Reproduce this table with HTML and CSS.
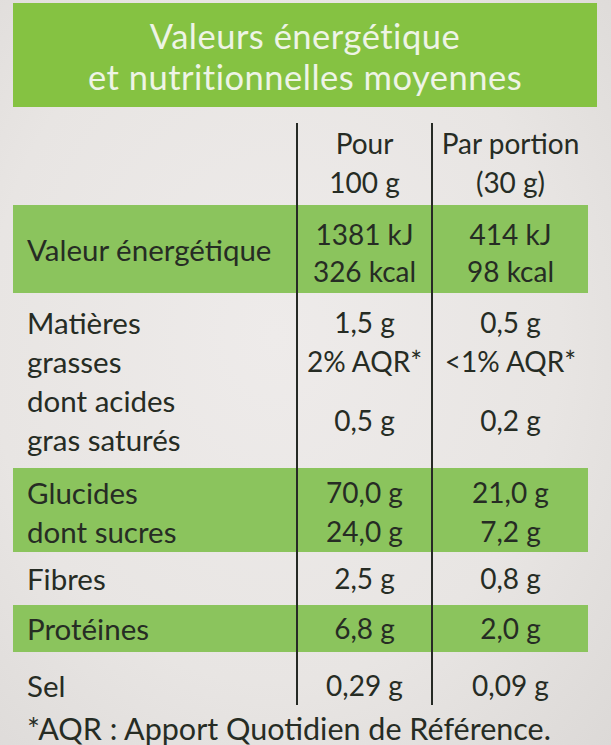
FILE: index.html
```html
<!DOCTYPE html>
<html lang="fr">
<head>
<meta charset="utf-8">
<title>Valeurs nutritionnelles</title>
<link rel="stylesheet" href="styles.css">
</head>
<body>
<div class="label">
  <div class="title">
    <div>Valeurs énergétique</div>
    <div>et nutritionnelles moyennes</div>
  </div>
  <div class="table">
    <div class="row head">
      <div class="c1"></div>
      <div class="c2"><div>Pour</div><div>100 g</div></div>
      <div class="c3"><div>Par portion</div><div>(30 g)</div></div>
    </div>
    <div class="row green energy">
      <div class="c1">Valeur énergétique</div>
      <div class="c2"><div>1381 kJ</div><div>326 kcal</div></div>
      <div class="c3"><div>414 kJ</div><div>98 kcal</div></div>
    </div>
    <div class="row fat1">
      <div class="c1"><div>Matières</div><div>grasses</div></div>
      <div class="c2"><div>1,5 g</div><div>2% AQR*</div></div>
      <div class="c3"><div>0,5 g</div><div>&lt;1% AQR*</div></div>
    </div>
    <div class="row fat2">
      <div class="c1"><div>dont acides</div><div>gras saturés</div></div>
      <div class="c2 mid">0,5 g</div>
      <div class="c3 mid">0,2 g</div>
    </div>
    <div class="row green carbs">
      <div class="c1"><div>Glucides</div><div>dont sucres</div></div>
      <div class="c2"><div>70,0 g</div><div>24,0 g</div></div>
      <div class="c3"><div>21,0 g</div><div>7,2 g</div></div>
    </div>
    <div class="row single fib">
      <div class="c1">Fibres</div>
      <div class="c2">2,5 g</div>
      <div class="c3">0,8 g</div>
    </div>
    <div class="row green single prot">
      <div class="c1">Protéines</div>
      <div class="c2">6,8 g</div>
      <div class="c3">2,0 g</div>
    </div>
    <div class="row single sel">
      <div class="c1">Sel</div>
      <div class="c2">0,29 g</div>
      <div class="c3">0,09 g</div>
    </div>
  </div>
  <div class="note">*AQR : Apport Quotidien de Référence.</div>
</div>
</body>
</html>
```
FILE: styles.css
```css
html, body {
  margin: 0;
  padding: 0;
}
body {
  width: 611px;
  height: 745px;
  overflow: hidden;
  background: radial-gradient(ellipse at 45% 45%, #eeebea 0%, #e8e5e3 60%, #dcd9d7 100%);
  font-family: Lato, "Open Sans", sans-serif;
  color: #262c24;
}
.label {
  padding: 3px 0 0 13px;
}
.title {
  width: 584px;
  height: 104px;
  background: #85c242;
  color: #eef4e6;
  font-size: 34.5px;
  line-height: 41.5px;
  letter-spacing: 0.5px;
  text-align: center;
  display: flex;
  flex-direction: column;
  justify-content: center;
  box-sizing: border-box;
  padding-top: 2px;
}
.table {
  margin-top: 16px;
  width: 575px;
  font-size: 28px;
  line-height: 39px;
}
.row {
  display: grid;
  grid-template-columns: 283px 137px 155px;
}
.row > div {
  box-sizing: border-box;
}
.c1 {
  padding-left: 14px;
  font-size: 29.5px;
}
.c2 {
  border-left: 2px solid #262a25;
  border-right: 2px solid #262a25;
  text-align: center;
}
.c3 {
  text-align: center;
}
.green {
  background: #8bc45d;
}
.head {
  height: 82px;
}
.head .c2, .head .c3 {
  padding-top: 1px;
}
.energy {
  height: 88px;
  line-height: 37px;
}
.energy .c1 {
  display: flex;
  align-items: center;
}
.energy .c2, .energy .c3 {
  padding-top: 11px;
}
.fat1 {
  height: 88px;
}
.fat1 .c1, .fat1 .c2, .fat1 .c3 {
  padding-top: 10px;
}
.fat2 {
  height: 87px;
}
.mid {
  display: flex;
  align-items: center;
  justify-content: center;
  padding-bottom: 8px;
}
.carbs {
  height: 84px;
}
.carbs .c1, .carbs .c2, .carbs .c3 {
  padding-top: 5px;
}
.single > div {
  display: flex;
  align-items: center;
}
.single .c2, .single .c3 {
  justify-content: center;
}
.fib {
  height: 53px;
}
.prot {
  height: 47px;
}
.sel {
  height: 48px;
}
.sel > div {
  padding-top: 14px;
}
.note {
  font-size: 30.5px;
  line-height: 28px;
  padding-left: 14px;
  margin-top: 14px;
  white-space: nowrap;
}
```
